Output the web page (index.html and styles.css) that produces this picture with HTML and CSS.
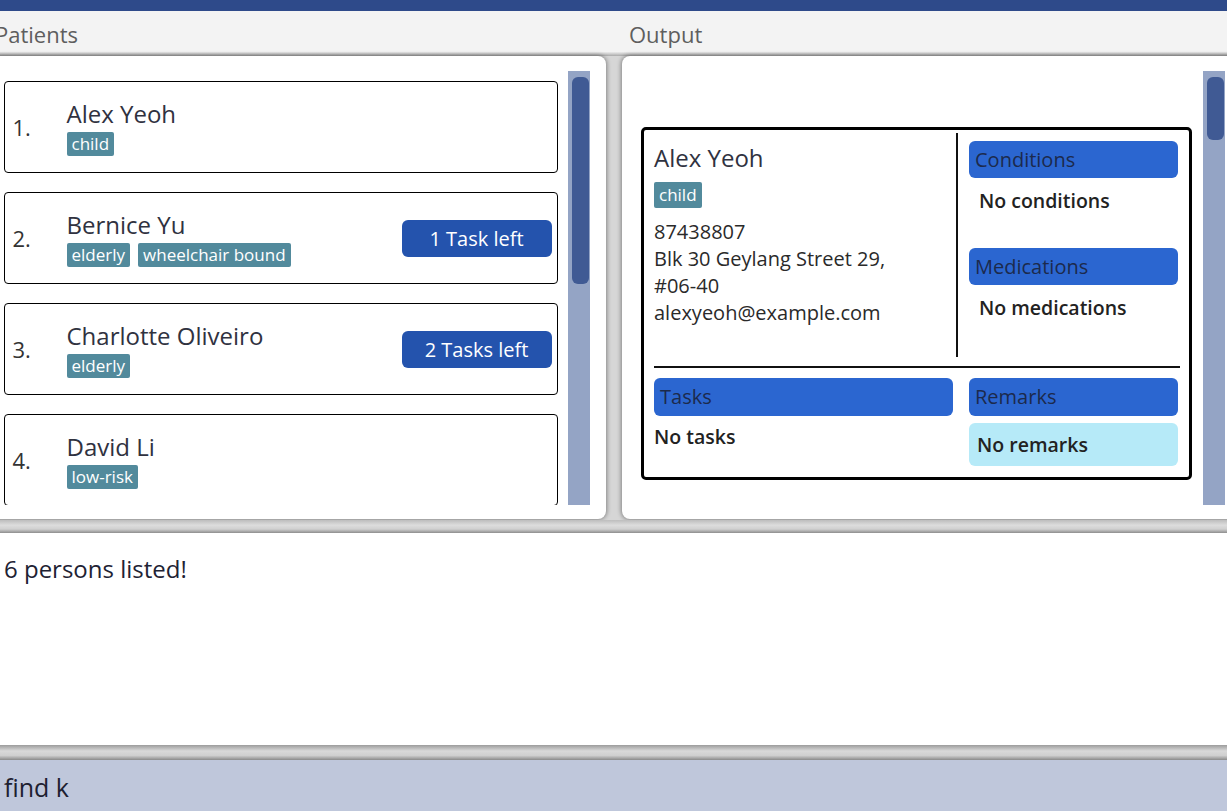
FILE: index.html
```html
<!DOCTYPE html>
<html>
<head>
<meta charset="utf-8">
<link rel="stylesheet" href="styles.css">
</head>
<body>
<div class="app">
  <div class="menubar"></div>
  <div class="titles">
    <div class="title title-left">Patients</div>
    <div class="title">Output</div>
  </div>
  <div class="panes">
    <div class="panel panel-left">
      <div class="cards">
        <div class="card">
          <div class="index">1.</div>
          <div class="info">
            <div class="name">Alex Yeoh</div>
            <div class="tags"><span class="tag">child</span></div>
          </div>
        </div>
        <div class="card">
          <div class="index">2.</div>
          <div class="info">
            <div class="name">Bernice Yu</div>
            <div class="tags"><span class="tag">elderly</span><span class="tag">wheelchair bound</span></div>
          </div>
          <div class="badge">1 Task left</div>
        </div>
        <div class="card">
          <div class="index">3.</div>
          <div class="info">
            <div class="name">Charlotte Oliveiro</div>
            <div class="tags"><span class="tag">elderly</span></div>
          </div>
          <div class="badge">2 Tasks left</div>
        </div>
        <div class="card">
          <div class="index">4.</div>
          <div class="info">
            <div class="name">David Li</div>
            <div class="tags"><span class="tag">low-risk</span></div>
          </div>
        </div>
      </div>
      <div class="scroll"><div class="thumb thumb-left"></div></div>
    </div>
    <div class="panel panel-right">
      <div class="detail-list">
        <div class="detail">
          <div class="detail-top">
            <div class="d-left">
              <div class="d-name">Alex Yeoh</div>
              <div class="d-tags"><span class="tag tag-lg">child</span></div>
              <div class="contact">
                <div>87438807</div>
                <div>Blk 30 Geylang Street 29, #06-40</div>
                <div>alexyeoh@example.com</div>
              </div>
            </div>
            <div class="vline"></div>
            <div class="d-right">
              <div class="sec-head">Conditions</div>
              <div class="sec-body">No conditions</div>
              <div class="sec-head sec-second">Medications</div>
              <div class="sec-body">No medications</div>
            </div>
          </div>
          <div class="hrule"></div>
          <div class="detail-bottom">
            <div class="b-left">
              <div class="sec-head sec-tall">Tasks</div>
              <div class="notasks">No tasks</div>
            </div>
            <div class="b-right">
              <div class="sec-head sec-tall">Remarks</div>
              <div class="remarks">No remarks</div>
            </div>
          </div>
        </div>
      </div>
      <div class="scroll"><div class="thumb thumb-right"></div></div>
    </div>
  </div>
  <div class="divider divider-1"></div>
  <div class="result">6 persons listed!</div>
  <div class="divider divider-2"></div>
  <div class="command">find k</div>
</div>
</body>
</html>
```

FILE: styles.css
```css
* {
  box-sizing: border-box;
  margin: 0;
  padding: 0;
}

html, body {
  width: 1227px;
  height: 811px;
  overflow: hidden;
}

body {
  font-family: "Open Sans", "Noto Sans", sans-serif;
  background: #ffffff;
  color: #2a2a2a;
}

.app {
  width: 1251px;
  height: 811px;
  margin-left: -9px;
  display: flex;
  flex-direction: column;
}

.menubar {
  height: 11px;
  background: #2e4a8a;
  flex: none;
}

.titles {
  height: 41px;
  flex: none;
  display: grid;
  grid-template-columns: 615px 620px;
  column-gap: 16px;
  background: #f3f3f3;
  padding-top: 8px;
}

.title {
  padding-left: 7px;
  font-size: 22px;
  line-height: 30px;
  color: #5e5e5e;
  font-weight: 500;
}

.title-left {
  padding-left: 4px;
}

.panes {
  height: 468px;
  flex: none;
  display: grid;
  grid-template-columns: 615px 620px;
  column-gap: 16px;
  padding-top: 4px;
  padding-bottom: 1px;
  background: linear-gradient(#ececec, #a9a9a9) top / 100% 4px no-repeat, #d6d6d6;
}

.panel {
  background: #ffffff;
  border-radius: 8px;
  box-shadow: 0 0 4px 1px rgba(0, 0, 0, 0.38);
  display: flex;
  overflow: hidden;
}

.panel-left {
  padding: 15px 16px 14px 13px;
  gap: 10px;
}

.panel-right {
  padding: 15px 17px 14px 13px;
  gap: 11px;
}

.cards {
  flex: 1;
  min-width: 0;
  display: flex;
  flex-direction: column;
  gap: 19px;
  padding-top: 10px;
  overflow: hidden;
}

.scroll {
  width: 22px;
  flex: none;
  background: #94a4c5;
  padding: 6px 1px 0 4px;
}

.thumb {
  background: #405a94;
  border-radius: 6px;
}

.thumb-left {
  height: 207px;
}

.thumb-right {
  height: 63px;
}

.card {
  height: 92px;
  flex: none;
  border: 1.5px solid #000000;
  border-radius: 4px;
  display: flex;
  align-items: center;
  padding: 0 5.5px 0 7.5px;
}

.index {
  width: 54px;
  flex: none;
  font-size: 22px;
  color: #333333;
  font-weight: 500;
}

.info {
  flex: 1;
  display: flex;
  flex-direction: column;
}

.name {
  font-size: 24px;
  line-height: 30px;
  color: #30323f;
  font-weight: 500;
}

.tags {
  display: flex;
  gap: 8px;
  margin-top: 3px;
}

.tag {
  background: #528a9c;
  color: #ffffff;
  font-size: 17px;
  line-height: 24px;
  padding: 0 5px;
  border-radius: 2px;
  font-weight: 500;
}

.tag-lg {
  line-height: 26px;
}

.badge {
  width: 150px;
  height: 37px;
  flex: none;
  background: #2453ad;
  color: #ffffff;
  border-radius: 6px;
  font-size: 20px;
  font-weight: 500;
  display: flex;
  align-items: center;
  justify-content: center;
}

.detail-list {
  flex: 1;
  min-width: 0;
  padding: 56px 0 0 6px;
}

.detail {
  height: 353px;
  border: 3px solid #000000;
  border-radius: 5px;
  padding: 0 11px 0 10px;
  display: flex;
  flex-direction: column;
}

.detail-top {
  height: 227px;
  display: flex;
}

.d-left {
  flex: 1;
  padding-top: 12px;
}

.d-name {
  font-size: 24px;
  line-height: 32px;
  color: #30323f;
  font-weight: 500;
}

.d-tags {
  display: flex;
  margin-top: 8px;
}

.contact {
  margin-top: 10px;
  max-width: 260px;
  font-size: 20px;
  line-height: 27px;
  color: #2a2a2a;
  font-weight: 500;
}

.vline {
  width: 2px;
  margin-top: 3px;
  background: #111111;
}

.d-right {
  width: 209px;
  margin-left: 11px;
  padding-top: 11px;
}

.sec-head {
  height: 37px;
  background: #2b66d0;
  border-radius: 6px;
  color: #1c2a4c;
  font-size: 20px;
  line-height: 37px;
  padding-left: 6px;
  font-weight: 500;
}

.sec-tall {
  height: 38px;
  line-height: 38px;
}

.sec-second {
  margin-top: 32px;
}

.sec-body {
  margin-top: 8px;
  padding-left: 10px;
  font-size: 19.5px;
  line-height: 30px;
  font-weight: 550;
  color: #222222;
}

.hrule {
  height: 2px;
  background: #111111;
  margin-top: 9px;
  margin-right: -2px;
}

.detail-bottom {
  display: flex;
  gap: 16px;
  margin-top: 10px;
}

.b-left {
  width: 299px;
}

.b-right {
  width: 209px;
}

.notasks {
  margin-top: 6px;
  font-size: 19.5px;
  line-height: 30px;
  font-weight: 550;
  color: #222222;
}

.remarks {
  margin-top: 7px;
  height: 43px;
  background: #b6eaf8;
  border-radius: 6px;
  padding-left: 8px;
  font-size: 19.5px;
  line-height: 43px;
  font-weight: 550;
  color: #222222;
}

.divider {
  flex: none;
}

.divider-1 {
  height: 13px;
  background: linear-gradient(#bdbdbd, #dddddd 40%, #d0d0d0 70%, #8e8e8e);
}

.divider-2 {
  height: 15px;
  background: linear-gradient(#9c9c9c, #d9d9d9 40%, #cfcfcf 70%, #8a8a8a);
}

.result {
  height: 212px;
  flex: none;
  background: #ffffff;
  padding: 20px 0 0 13px;
  font-size: 24px;
  line-height: 32px;
  color: #1e2233;
  font-weight: 500;
}

.command {
  height: 51px;
  flex: none;
  background: #bfc7db;
  padding: 11px 0 0 13px;
  font-size: 25px;
  line-height: 32px;
  color: #1d2030;
  font-weight: 500;
}
```
